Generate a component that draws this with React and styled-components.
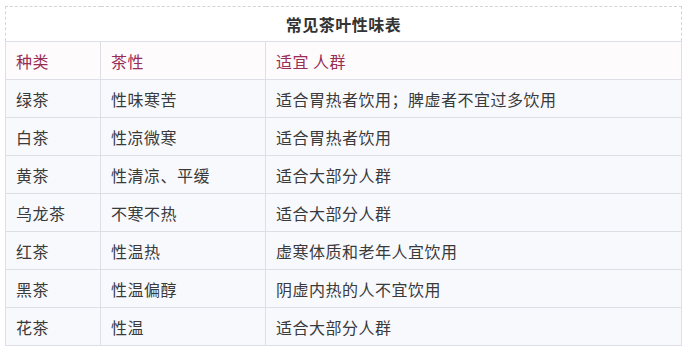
import styled, { createGlobalStyle } from "styled-components";

const GlobalStyle = createGlobalStyle`
  body {
    margin: 0;
    background: #ffffff;
    font-family: "Noto Sans CJK SC", "Noto Sans", sans-serif;
  }
`;

const Page = styled.div`
  padding: 6px 10px 0 5px;
`;

const Table = styled.table`
  width: 677px;
  border-collapse: collapse;
  table-layout: fixed;
  font-size: 16px;
  letter-spacing: 0.5px;
  color: #3a3a3a;
`;

const TitleCell = styled.th`
  height: 34px;
  padding: 0;
  text-align: center;
  font-weight: 600;
  color: #333;
  background: #ffffff;
  border: 1px dashed #d4d4d4;
  border-bottom: 1px solid #dcdfe6;
`;

const Row = styled.tr`
  height: 38px;
  background: ${({ $head }) => ($head ? "#fdfbfc" : "#f8f9fd")};
`;

const Cell = styled.td`
  padding: 0 10px;
  border: 1px solid #dcdfe6;
  color: ${({ $head }) => ($head ? "#9a2d55" : "#3a3a3a")};
  white-space: nowrap;
`;

const rows = [
  ["绿茶", "性味寒苦", "适合胃热者饮用；脾虚者不宜过多饮用"],
  ["白茶", "性凉微寒", "适合胃热者饮用"],
  ["黄茶", "性清凉、平缓", "适合大部分人群"],
  ["乌龙茶", "不寒不热", "适合大部分人群"],
  ["红茶", "性温热", "虚寒体质和老年人宜饮用"],
  ["黑茶", "性温偏醇", "阴虚内热的人不宜饮用"],
  ["花茶", "性温", "适合大部分人群"],
];

const App = () => {
  return (
    <Page>
      <GlobalStyle />
      <Table>
        <colgroup>
          <col style={{ width: 95 }} />
          <col style={{ width: 165 }} />
          <col />
        </colgroup>
        <thead>
          <tr>
            <TitleCell colSpan={3}>常见茶叶性味表</TitleCell>
          </tr>
        </thead>
        <tbody>
          <Row $head>
            <Cell $head>种类</Cell>
            <Cell $head>茶性</Cell>
            <Cell $head>适宜 人群</Cell>
          </Row>
          {rows.map((r) => (
            <Row key={r[0]}>
              <Cell>{r[0]}</Cell>
              <Cell>{r[1]}</Cell>
              <Cell>{r[2]}</Cell>
            </Row>
          ))}
        </tbody>
      </Table>
    </Page>
  );
};

export default App;
